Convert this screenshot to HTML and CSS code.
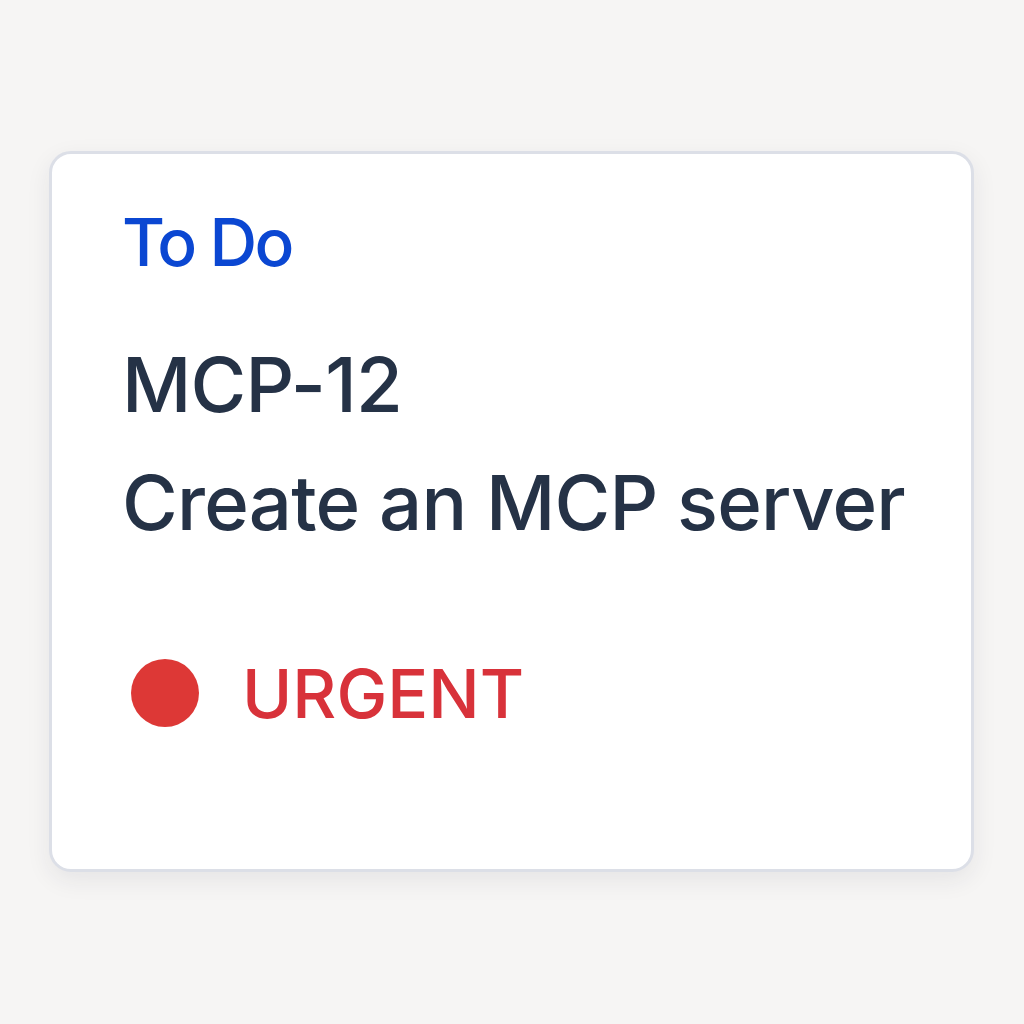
FILE: index.html
```html
<!DOCTYPE html>
<html>
<head>
<meta charset="utf-8">
<link rel="stylesheet" href="styles.css">
</head>
<body>
<div class="card">
  <div class="status">To Do</div>
  <div class="title">
    <div class="key">MCP-12</div>
    <div class="summary">Create an MCP server</div>
  </div>
  <div class="priority">
    <span class="dot"></span>
    <span class="label">URGENT</span>
  </div>
</div>
</body>
</html>
```

FILE: styles.css
```css
html, body {
  margin: 0;
  padding: 0;
}
body {
  width: 1024px;
  height: 1024px;
  background: #f6f5f4;
  font-family: Inter, "Noto Sans", sans-serif;
  padding-top: 151px;
  padding-left: 49px;
  box-sizing: border-box;
}
.card {
  width: 925px;
  height: 721px;
  box-sizing: border-box;
  background: #ffffff;
  border: 3px solid #dcdfe7;
  border-radius: 22px;
  box-shadow: 0 8px 24px rgba(40, 40, 60, 0.08);
  padding: 46px 40px 0 70px;
  display: flex;
  flex-direction: column;
}
.status {
  font-size: 66px;
  line-height: 84px;
  color: #0b47d2;
  font-weight: 500;
  letter-spacing: -2.6px;
}
.title {
  margin-top: 41px;
  font-size: 76px;
  line-height: 118px;
  color: #253246;
  font-weight: 500;
  letter-spacing: -0.75px;
  white-space: nowrap;
}
.priority {
  margin-top: 90px;
  display: flex;
  align-items: center;
}
.dot {
  width: 68px;
  height: 68px;
  border-radius: 50%;
  background: #dd3836;
  margin-left: 9px;
}
.label {
  margin-left: 43px;
  font-size: 68px;
  line-height: 84px;
  color: #d8323a;
  font-weight: 500;
}
```
